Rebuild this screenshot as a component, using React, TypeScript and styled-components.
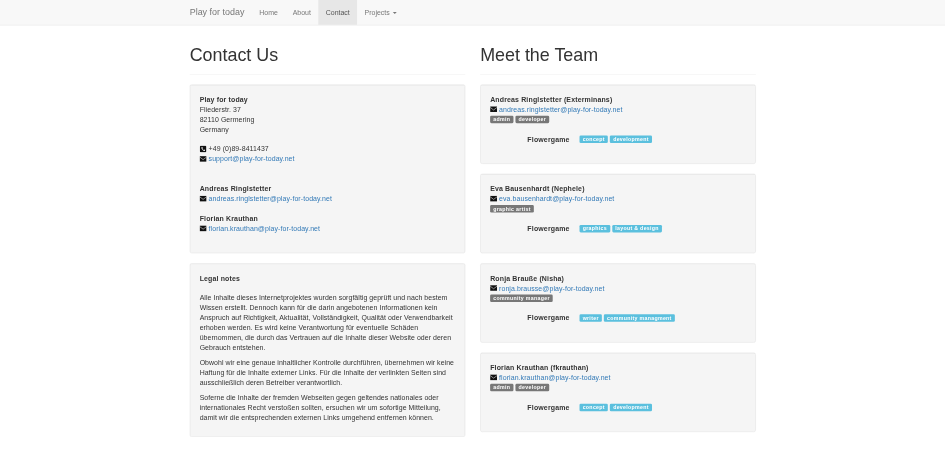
import React from "react";
import styled, { createGlobalStyle } from "styled-components";

const GlobalStyle = createGlobalStyle`
  html, body {
    margin: 0;
    padding: 0;
    overflow: hidden;
    background: #fff;
  }
  a {
    color: #337ab7;
    text-decoration: none;
  }
`;

const Frame = styled.div`
  width: 945px;
  height: 450px;
  overflow: hidden;
`;

// the shot is a 1903px wide page photographed down to 945px
const Page = styled.div`
  width: 1904px;
  height: 906px;
  overflow: hidden;
  transform: scale(${945 / 1903});
  transform-origin: 0 0;
  filter: blur(0.75px);
  color: #333;
  font-family: "Liberation Sans", Arial, sans-serif;
  font-size: 14px;
  line-height: 20px;
`;

const Navbar = styled.nav`
  height: 51px;
  box-sizing: border-box;
  background: #f8f8f8;
  border-bottom: 1px solid #e7e7e7;
  margin-bottom: 19px;
`;

const NavInner = styled.div`
  width: 1170px;
  box-sizing: border-box;
  margin: 0 auto;
  padding: 0 15px;
  display: flex;
`;

const Brand = styled.a`
  color: #777;
  font-size: 18px;
  line-height: 50px;
  padding-right: 15px;
`;

const NavLink = styled.a<{ $active?: boolean }>`
  line-height: 50px;
  padding: 0 15px;
  color: ${props => (props.$active ? "#555" : "#777")};
  background: ${props => (props.$active ? "#e7e7e7" : "transparent")};
`;

const Caret = styled.span`
  display: inline-block;
  vertical-align: middle;
  margin-left: 6px;
  border-top: 4px solid #777;
  border-left: 4px solid transparent;
  border-right: 4px solid transparent;
`;

const Columns = styled.main`
  width: 1170px;
  box-sizing: border-box;
  margin: 0 auto;
  padding: 0 15px;
  display: grid;
  grid-template-columns: 555px 555px;
  column-gap: 30px;
`;

const PageHeader = styled.div`
  padding: 20px 0 9px;
  margin-bottom: 20px;
  border-bottom: 1px solid #eee;
`;

const Title = styled.h1`
  margin: 0 0 10px;
  font-size: 36px;
  font-weight: 500;
  line-height: 39.6px;
`;

const Well = styled.section`
  box-sizing: border-box;
  background: #f5f5f5;
  border: 1px solid #e3e3e3;
  border-radius: 4px;
  box-shadow: inset 0 1px 1px rgba(0, 0, 0, 0.05);
  padding: 19px;
  margin-bottom: 20px;
  letter-spacing: 0.17px;
`;

const Block = styled.div<{ $gap?: number }>`
  margin-bottom: ${props => props.$gap ?? 20}px;
`;

const Strong = styled.div`
  font-weight: 700;
  letter-spacing: 0.33px;
`;

const IconLine = styled.div`
  display: flex;
  align-items: center;
  gap: 4px;
`;

const IconSvg = styled.svg`
  width: 14px;
  height: 14px;
  flex: none;
`;

const Para = styled.p`
  margin: 0 0 10px;
  letter-spacing: 0.1px;
`;

const LabelRow = styled.div`
  display: flex;
  align-items: center;
  gap: 4px;
  height: 20px;
  box-sizing: border-box;
  padding-top: 2px;
`;

const Label = styled.span<{ $info?: boolean }>`
  background: ${props => (props.$info ? "#5bc0de" : "#777")};
  color: #fff;
  font-size: 10.5px;
  font-weight: 700;
  line-height: 10.5px;
  letter-spacing: 0.65px;
  padding: 2.1px 6.3px 3.15px;
  border-radius: 2.6px;
  white-space: nowrap;
`;

const ProjectRow = styled.dl`
  display: grid;
  grid-template-columns: 160px 1fr;
  column-gap: 20px;
  margin: 20px 0;
`;

const ProjectName = styled.dt`
  font-weight: 700;
  letter-spacing: 0.33px;
  text-align: right;
`;

const ProjectRoles = styled.dd`
  margin: 0;
`;

const MailIcon = () => (
  <IconSvg viewBox="0 0 14 14">
    <rect y="1.5" width="14" height="11" fill="#111" />
    <path d="M0 3.2 L7 8.5 L14 3.2" fill="none" stroke="#f5f5f5" strokeWidth="1.1" />
  </IconSvg>
);

const PhoneIcon = () => (
  <IconSvg viewBox="0 0 14 14">
    <rect x="0.5" y="0.5" width="13" height="13" rx="2" fill="#111" />
    <path
      d="M3.5 3.5 L5.5 3 L6.5 5.5 L5.5 6.5 C6 7.7 6.8 8.5 8 9 L9 8 L11 9 L10.5 11 C7 11.2 3.3 7.5 3.5 3.5 Z"
      fill="#f5f5f5"
    />
  </IconSvg>
);

const MailLine = ({ address }: { address: string }) => (
  <IconLine>
    <MailIcon />
    <a href={`mailto:${address}`}>{address}</a>
  </IconLine>
);

type Member = {
  name: string;
  email: string;
  roles: string[];
  project: string[];
};

const team: Member[] = [
  {
    name: "Andreas Ringlstetter (Exterminans)",
    email: "andreas.ringlstetter@play-for-today.net",
    roles: ["admin", "developer"],
    project: ["concept", "development"],
  },
  {
    name: "Eva Bausenhardt (Nephele)",
    email: "eva.bausenhardt@play-for-today.net",
    roles: ["graphic artist"],
    project: ["graphics", "layout & design"],
  },
  {
    name: "Ronja Brauße (Nisha)",
    email: "ronja.brausse@play-for-today.net",
    roles: ["community manager"],
    project: ["writer", "community managment"],
  },
  {
    name: "Florian Krauthan (fkrauthan)",
    email: "florian.krauthan@play-for-today.net",
    roles: ["admin", "developer"],
    project: ["concept", "development"],
  },
];

const App = () => {
  return (
    <Frame>
      <GlobalStyle />
      <Page>
        <Navbar>
          <NavInner>
            <Brand href="#">Play for today</Brand>
            <NavLink href="#">Home</NavLink>
            <NavLink href="#">About</NavLink>
            <NavLink href="#" $active>
              Contact
            </NavLink>
            <NavLink href="#">
              Projects
              <Caret />
            </NavLink>
          </NavInner>
        </Navbar>
        <Columns>
          <div>
            <PageHeader>
              <Title>Contact Us</Title>
            </PageHeader>
            <Well>
              <Block $gap={40}>
                <Strong>Play for today</Strong>
                <div>Fliederstr. 37</div>
                <div>82110 Germering</div>
                <Block>Germany</Block>
                <IconLine>
                  <PhoneIcon />
                  +49 (0)89-8411437
                </IconLine>
                <MailLine address="support@play-for-today.net" />
              </Block>
              <Block>
                <Strong>Andreas Ringlstetter</Strong>
                <MailLine address="andreas.ringlstetter@play-for-today.net" />
              </Block>
              <Block>
                <Strong>Florian Krauthan</Strong>
                <MailLine address="florian.krauthan@play-for-today.net" />
              </Block>
            </Well>
            <Well>
              <Block>
                <Strong>Legal notes</Strong>
              </Block>
              <Para>
                Alle Inhalte dieses Internetprojektes wurden sorgfältig geprüft und nach bestem
                Wissen erstellt. Dennoch kann für die darin angebotenen Informationen kein
                Anspruch auf Richtigkeit, Aktualität, Vollständigkeit, Qualität oder Verwendbarkeit
                erhoben werden. Es wird keine Verantwortung für eventuelle Schäden
                übernommen, die durch das Vertrauen auf die Inhalte dieser Website oder deren
                Gebrauch entstehen.
              </Para>
              <Para>
                Obwohl wir eine genaue inhaltlicher Kontrolle durchführen, übernehmen wir keine
                Haftung für die Inhalte externer Links. Für die Inhalte der verlinkten Seiten sind
                ausschließlich deren Betreiber verantwortlich.
              </Para>
              <Para>
                Soferne die Inhalte der fremden Webseiten gegen geltendes nationales oder
                internationales Recht verstoßen sollten, ersuchen wir um sofortige Mitteilung,
                damit wir die entsprechenden externen Links umgehend entfernen können.
              </Para>
            </Well>
          </div>
          <div>
            <PageHeader>
              <Title>Meet the Team</Title>
            </PageHeader>
            {team.map(member => (
              <Well key={member.email}>
                <Strong>{member.name}</Strong>
                <MailLine address={member.email} />
                <LabelRow>
                  {member.roles.map(role => (
                    <Label key={role}>{role}</Label>
                  ))}
                </LabelRow>
                <ProjectRow>
                  <ProjectName>Flowergame</ProjectName>
                  <ProjectRoles>
                    <LabelRow>
                      {member.project.map(role => (
                        <Label key={role} $info>
                          {role}
                        </Label>
                      ))}
                    </LabelRow>
                  </ProjectRoles>
                </ProjectRow>
              </Well>
            ))}
          </div>
        </Columns>
      </Page>
    </Frame>
  );
};

export default App;
